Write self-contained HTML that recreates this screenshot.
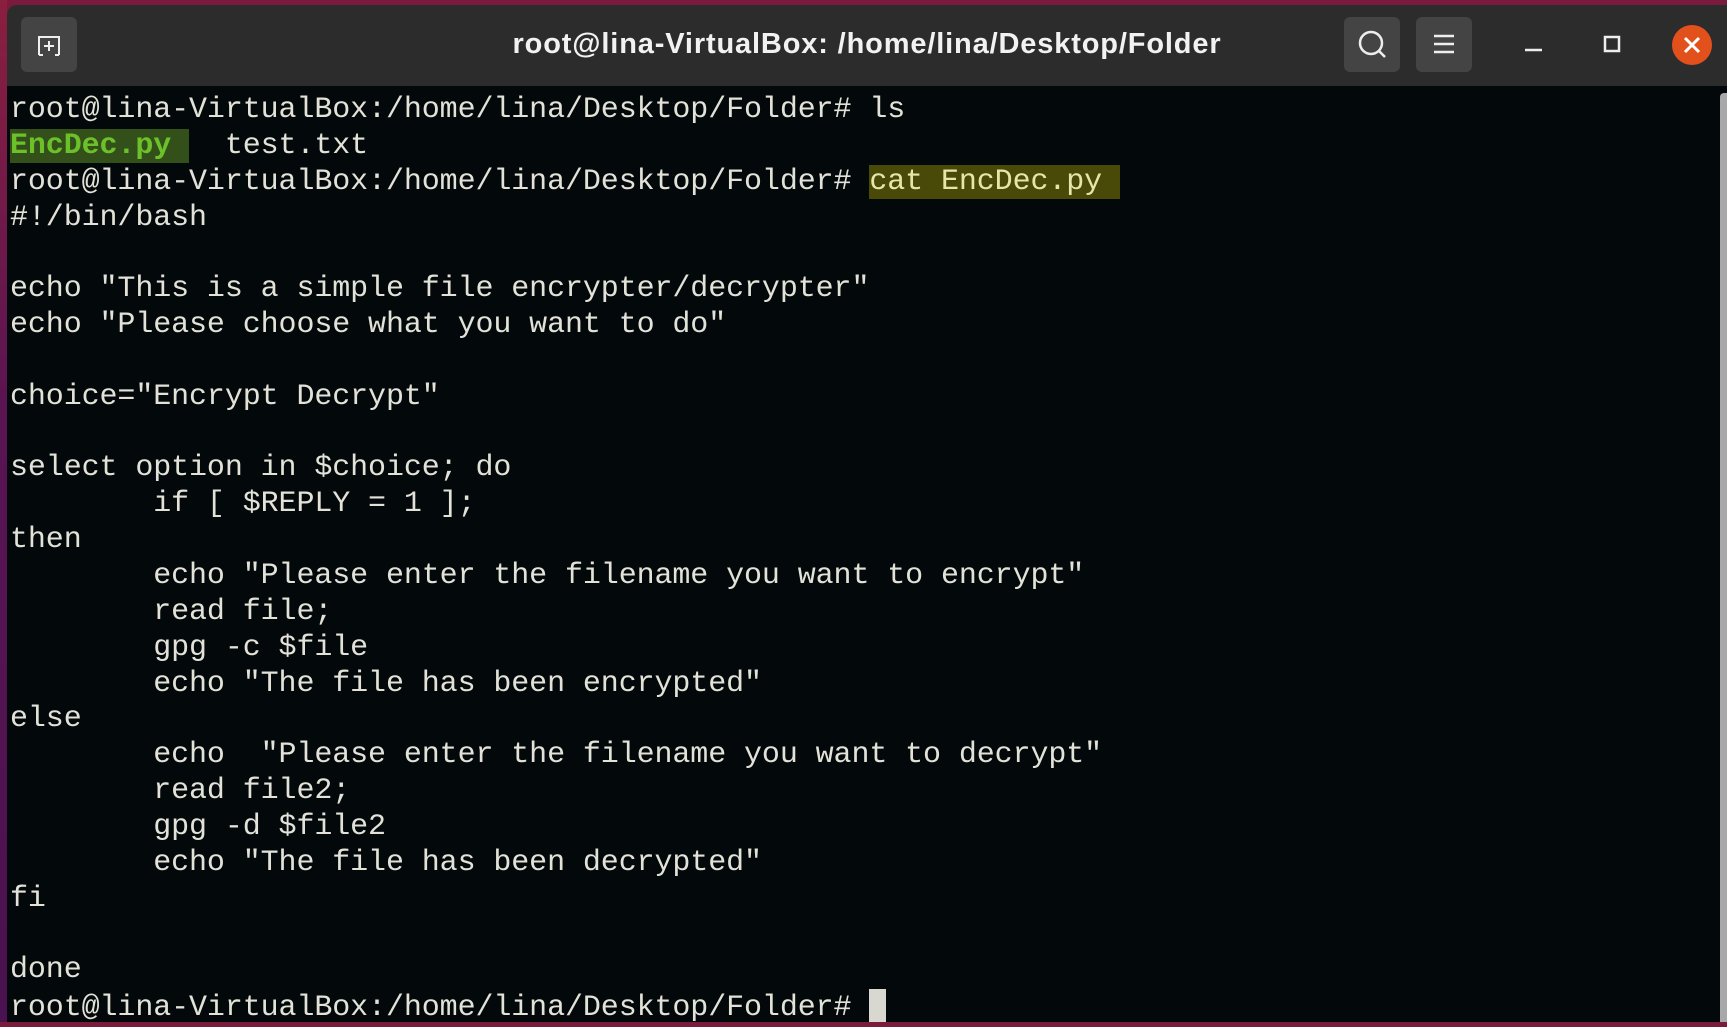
<!DOCTYPE html>
<html><head><meta charset="utf-8"><style>
html,body{margin:0;padding:0;width:1727px;height:1022px;overflow:hidden;background:#7a1a3c;}
#left{position:absolute;left:0;top:0;width:7px;height:1022px;background:linear-gradient(#8a1f3f,#5a1452 40%,#4a1250);}
#win{position:absolute;left:7px;top:5px;width:1720px;height:1017px;background:#2c2c2c;border-top-left-radius:10px;}
#term{position:absolute;left:7px;top:86px;width:1720px;height:936px;background:#03080b;}
pre{position:absolute;left:10px;top:93px;margin:0;font-family:"Liberation Mono",monospace;font-size:30px;letter-spacing:-0.1px;line-height:35.85px;color:#e2e2d8;white-space:pre;}
.g{background:#34501a;color:#6cc12a;font-weight:bold;}
.h{background:#4a4a08;color:#e6e6a8;}
.cur{display:inline-block;width:17px;height:33px;background:#d8d8d0;vertical-align:-7px;}
.btn{position:absolute;top:17px;width:56px;height:55px;background:#444;border-radius:6px;}
#title{position:absolute;left:7px;width:1720px;top:28px;text-align:center;font-family:"Liberation Sans",sans-serif;font-weight:bold;font-size:29px;letter-spacing:0.85px;color:#f2f2f2;}
#scroll{position:absolute;left:1720px;top:93px;width:7px;height:929px;background:#a8a8a8;border-top-left-radius:4px;}
</style></head><body>
<div id="left"></div>
<div id="win"></div>
<div id="term"></div>
<div class="btn" style="left:21px;width:56px;"><svg width="56" height="55" viewBox="0 0 56 55"><path d="M18 38 V20 H38 V38 M22 38 H18 M38 38 H34 M28 24 V34 M23 29 H33" fill="none" stroke="#eee" stroke-width="2"/></svg></div>
<div id="title">root@lina-VirtualBox: /home/lina/Desktop/Folder</div>
<div class="btn" style="left:1344px;"><svg width="56" height="55"><circle cx="27" cy="26" r="11" fill="none" stroke="#eee" stroke-width="2.5"/><path d="M35 34 L41 40" stroke="#eee" stroke-width="2.5"/></svg></div>
<div class="btn" style="left:1416px;"><svg width="56" height="55"><path d="M18 19 H38 M18 27 H38 M18 35 H38" stroke="#eee" stroke-width="2.5"/></svg></div>
<svg style="position:absolute;left:1520px;top:30px" width="30" height="30"><path d="M5 20 H22" stroke="#eee" stroke-width="2.5"/></svg>
<svg style="position:absolute;left:1600px;top:30px" width="30" height="30"><rect x="5" y="7" width="14" height="14" fill="none" stroke="#eee" stroke-width="2.5"/></svg>
<svg style="position:absolute;left:1672px;top:25px" width="42" height="42"><circle cx="20" cy="20" r="20" fill="#e2511c"/><path d="M13 13 L27 27 M27 13 L13 27" stroke="#fff" stroke-width="3"/></svg>
<div id="scroll"></div>
<pre>root@lina-VirtualBox:/home/lina/Desktop/Folder# ls
<span class="g">EncDec.py </span>  test.txt
root@lina-VirtualBox:/home/lina/Desktop/Folder# <span class="h">cat EncDec.py </span>
#!/bin/bash

echo "This is a simple file encrypter/decrypter"
echo "Please choose what you want to do"

choice="Encrypt Decrypt"

select option in $choice; do
        if [ $REPLY = 1 ];
then
        echo "Please enter the filename you want to encrypt"
        read file;
        gpg -c $file
        echo "The file has been encrypted"
else
        echo  "Please enter the filename you want to decrypt"
        read file2;
        gpg -d $file2
        echo "The file has been decrypted"
fi

done
root@lina-VirtualBox:/home/lina/Desktop/Folder# <span class="cur"></span></pre>
</body></html>
